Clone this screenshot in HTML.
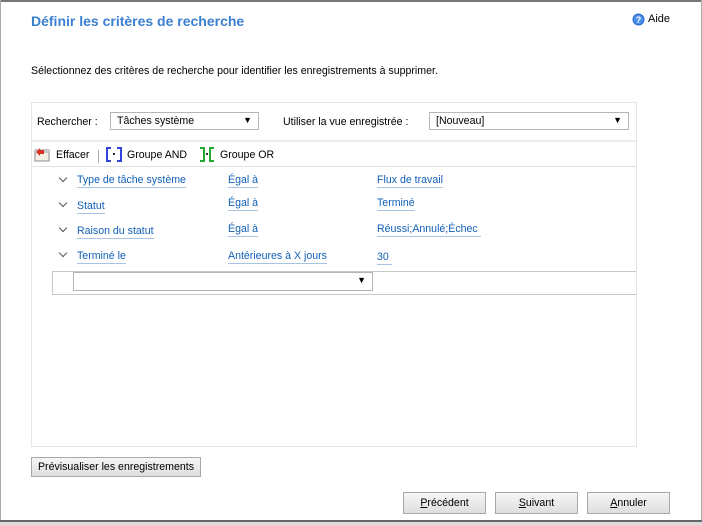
<!DOCTYPE html>
<html><head><meta charset="utf-8"><style>
body{margin:0;width:702px;height:525px;overflow:hidden;background:#fff;font-family:"Liberation Sans",sans-serif;font-size:10.6px;color:#000;position:relative}
.a{position:absolute;white-space:nowrap}
.lk{color:#1160b7;border-bottom:1px solid #a9c3e3;padding-bottom:1px}
.sel{position:absolute;border:1px solid #b5b5b5;background:#fff;height:18px;box-sizing:border-box;padding:2px 6px;font-size:10.6px}
.sel i{position:absolute;right:6px;top:2px;font-style:normal;font-size:9px}
.btn{position:absolute;border:1px solid #a8a8a8;background:linear-gradient(#f6f6f6,#dedede);box-sizing:border-box;text-align:center;font-size:10.6px;line-height:18px}
.chev{position:absolute;width:5px;height:5px;border-right:1.5px solid #555;border-bottom:1.5px solid #555;transform:rotate(45deg)}
</style></head><body>
<div class="a" style="left:0;top:0;width:702px;height:2px;background:#777"></div>
<div class="a" style="left:0;top:0;width:1px;height:522px;background:#aaa"></div>
<div class="a" style="left:701px;top:0;width:1px;height:522px;background:#aaa"></div>
<div class="a" style="left:0;top:520px;width:702px;height:2px;background:#666"></div>
<div class="a" style="left:0;top:522px;width:702px;height:3px;background:#dcdcdc"></div>
<div class="a" style="left:31px;top:13px;font-size:14px;font-weight:bold;color:#3b7fd0">Définir les critères de recherche</div>
<svg class="a" style="left:632px;top:13px" width="13" height="13"><circle cx="6.5" cy="6.5" r="6" fill="#2f6fd0"/><circle cx="6.5" cy="6.5" r="4.8" fill="#4a8ee8"/><text x="6.5" y="10" font-size="9" font-weight="bold" fill="#fff" text-anchor="middle" font-family="Liberation Sans">?</text></svg>
<div class="a" style="left:648px;top:13px;font-size:11px">Aide</div>
<div class="a" style="left:31px;top:65px">Sélectionnez des critères de recherche pour identifier les enregistrements à supprimer.</div>
<div class="a" style="left:31px;top:102px;width:604px;height:343px;border:1px solid #e6e6e6"></div>
<div class="a" style="left:32px;top:140px;width:604px;height:2px;background:#ececec"></div>
<div class="a" style="left:32px;top:166px;width:604px;height:1px;background:#e0e0e0"></div>
<div class="a" style="left:37px;top:116px">Rechercher :</div>
<div class="sel" style="left:110px;top:112px;width:149px">Tâches système<i>▼</i></div>
<div class="a" style="left:283px;top:116px">Utiliser la vue enregistrée :</div>
<div class="sel" style="left:429px;top:112px;width:200px">[Nouveau]<i>▼</i></div>
<svg class="a" style="left:34px;top:146px" width="17" height="16"><rect x="1" y="4" width="14" height="11" fill="#f3f0e6" stroke="#8a8a8a"/><rect x="1" y="4" width="14" height="3" fill="#c9c9c9"/><path d="M2 6 L6 2 L6 4 L10 4 L10 8 L6 8 L6 10Z" fill="#d8342a"/></svg>
<div class="a" style="left:56px;top:149px">Effacer</div>
<div class="a" style="left:98px;top:150px;width:1px;height:13px;background:#aaa"></div>
<svg class="a" style="left:106px;top:147px" width="16" height="15"><path d="M5 1H1V14H5M11 1H15V14H11" fill="none" stroke="#3344dd" stroke-width="2"/><rect x="7" y="6" width="2" height="2" fill="#333"/></svg>
<div class="a" style="left:127px;top:149px">Groupe AND</div>
<svg class="a" style="left:199px;top:147px" width="16" height="15"><path d="M1 1H5V14H1M15 1H11V14H15" fill="none" stroke="#22aa33" stroke-width="2"/><rect x="7" y="6" width="2" height="2" fill="#333"/></svg>
<div class="a" style="left:220px;top:149px">Groupe OR</div>
<div class="chev" style="left:60px;top:175px"></div>
<div class="chev" style="left:60px;top:200px"></div>
<div class="chev" style="left:60px;top:225px"></div>
<div class="chev" style="left:60px;top:250px"></div>
<div class="a lk" style="left:77px;top:174px">Type de tâche système</div>
<div class="a lk" style="left:228px;top:174px">Égal à</div>
<div class="a lk" style="left:377px;top:174px">Flux de travail</div>
<div class="a lk" style="left:77px;top:200px">Statut</div>
<div class="a lk" style="left:228px;top:197px">Égal à</div>
<div class="a lk" style="left:377px;top:197px">Terminé</div>
<div class="a lk" style="left:77px;top:225px">Raison du statut</div>
<div class="a lk" style="left:228px;top:223px">Égal à</div>
<div class="a lk" style="left:377px;top:223px">Réussi;Annulé;Échec&nbsp;</div>
<div class="a lk" style="left:77px;top:250px">Terminé le</div>
<div class="a lk" style="left:228px;top:250px">Antérieures à X jours</div>
<div class="a lk" style="left:377px;top:251px">30&nbsp;</div>
<div class="a" style="left:52px;top:271px;width:584px;height:24px;border:1px solid #c8c8c8;border-right:none;box-sizing:border-box"></div>
<div class="sel" style="left:73px;top:272px;width:300px;height:19px"><i>▼</i></div>
<div class="btn" style="left:31px;top:457px;width:170px;height:20px">Prévisualiser les enregistrements</div>
<div class="btn" style="left:403px;top:492px;width:83px;height:22px;line-height:20px"><u>P</u>récédent</div>
<div class="btn" style="left:495px;top:492px;width:83px;height:22px;line-height:20px"><u>S</u>uivant</div>
<div class="btn" style="left:587px;top:492px;width:83px;height:22px;line-height:20px"><u>A</u>nnuler</div>
</body></html>
